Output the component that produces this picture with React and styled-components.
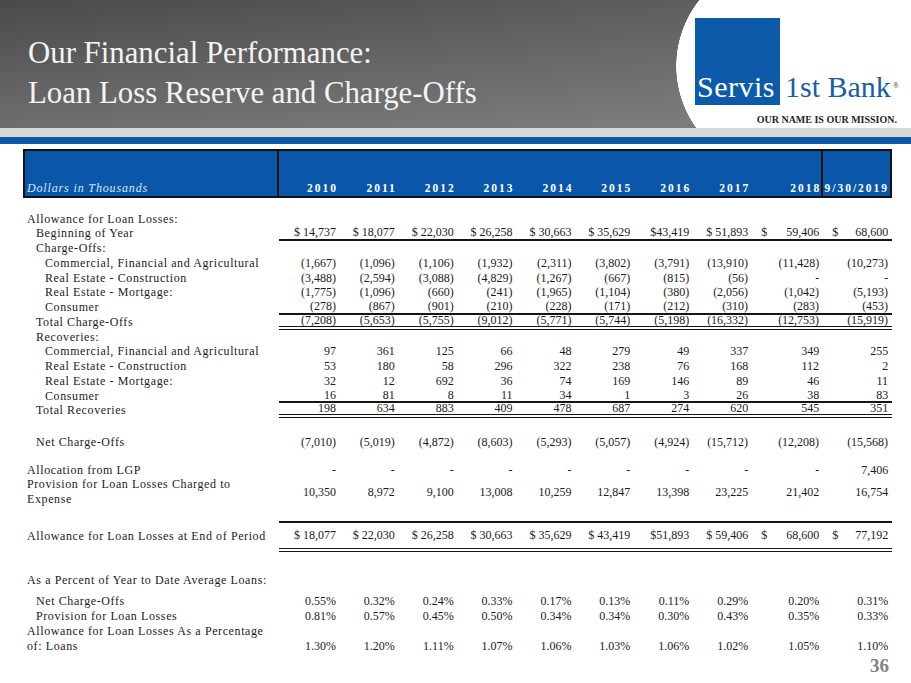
import React from 'react';
import styled, { createGlobalStyle } from 'styled-components';

const GlobalStyle = createGlobalStyle`
  *, *::before, *::after { box-sizing: border-box; }
  html, body { margin: 0; padding: 0; background: #fff; }
  body { font-family: "Liberation Serif", "Times New Roman", serif; }
`;

const COLS = '256px repeat(8, 58.9px) 71px 71px';

const YEARS = ['2010', '2011', '2012', '2013', '2014', '2015', '2016', '2017', '2018', '9/30/2019'];

const ROWS = [
  { label: 'Allowance for Loan Losses:', indent: 0, mt: 13.6 },
  { label: 'Beginning of Year', indent: 1, rule: 'single',
    values: ['$ 14,737', '$ 18,077', '$ 22,030', '$ 26,258', '$ 30,663', '$ 35,629', '$43,419', '$ 51,893', '$|59,406', '$|68,600'] },
  { label: 'Charge-Offs:', indent: 1 },
  { label: 'Commercial, Financial and Agricultural', indent: 2,
    values: ['(1,667)', '(1,096)', '(1,106)', '(1,932)', '(2,311)', '(3,802)', '(3,791)', '(13,910)', '(11,428)', '(10,273)'] },
  { label: 'Real Estate - Construction', indent: 2,
    values: ['(3,488)', '(2,594)', '(3,088)', '(4,829)', '(1,267)', '(667)', '(815)', '(56)', '-', '-'] },
  { label: 'Real Estate - Mortgage:', indent: 2,
    values: ['(1,775)', '(1,096)', '(660)', '(241)', '(1,965)', '(1,104)', '(380)', '(2,056)', '(1,042)', '(5,193)'] },
  { label: 'Consumer', indent: 2, rule: 'single',
    values: ['(278)', '(867)', '(901)', '(210)', '(228)', '(171)', '(212)', '(310)', '(283)', '(453)'] },
  { label: 'Total Charge-Offs', indent: 1, rule: 'double',
    values: ['(7,208)', '(5,653)', '(5,755)', '(9,012)', '(5,771)', '(5,744)', '(5,198)', '(16,332)', '(12,753)', '(15,919)'] },
  { label: 'Recoveries:', indent: 1 },
  { label: 'Commercial, Financial and Agricultural', indent: 2,
    values: ['97', '361', '125', '66', '48', '279', '49', '337', '349', '255'] },
  { label: 'Real Estate - Construction', indent: 2,
    values: ['53', '180', '58', '296', '322', '238', '76', '168', '112', '2'] },
  { label: 'Real Estate - Mortgage:', indent: 2,
    values: ['32', '12', '692', '36', '74', '169', '146', '89', '46', '11'] },
  { label: 'Consumer', indent: 2, rule: 'single',
    values: ['16', '81', '8', '11', '34', '1', '3', '26', '38', '83'] },
  { label: 'Total Recoveries', indent: 1, rule: 'double',
    values: ['198', '634', '883', '409', '478', '687', '274', '620', '545', '351'] },
  { label: 'Net Charge-Offs', indent: 1, mt: 16.5,
    values: ['(7,010)', '(5,019)', '(4,872)', '(8,603)', '(5,293)', '(5,057)', '(4,924)', '(15,712)', '(12,208)', '(15,568)'] },
  { label: 'Allocation from LGP', indent: 0, mt: 13.3,
    values: ['-', '-', '-', '-', '-', '-', '-', '-', '-', '7,406'] },
  { label: 'Provision for Loan Losses Charged to\nExpense', indent: 0, lines: 2,
    values: ['10,350', '8,972', '9,100', '13,008', '10,259', '12,847', '13,398', '23,225', '21,402', '16,754'] },
  { label: 'Allowance for Loan Losses at End of Period', indent: 0, mt: 14, rule: 'box',
    values: ['$ 18,077', '$ 22,030', '$ 26,258', '$ 30,663', '$ 35,629', '$ 43,419', '$51,893', '$ 59,406', '$|68,600', '$|77,192'] },
  { label: 'As a Percent of Year to Date Average Loans:', indent: 0, mt: 21.6 },
  { label: 'Net Charge-Offs', indent: 1, mt: 6.25,
    values: ['0.55%', '0.32%', '0.24%', '0.33%', '0.17%', '0.13%', '0.11%', '0.29%', '0.20%', '0.31%'] },
  { label: 'Provision for Loan Losses', indent: 1,
    values: ['0.81%', '0.57%', '0.45%', '0.50%', '0.34%', '0.34%', '0.30%', '0.43%', '0.35%', '0.33%'] },
  { label: 'Allowance for Loan Losses As a Percentage\nof: Loans', indent: 0, lines: 2, bottom: true,
    values: ['1.30%', '1.20%', '1.11%', '1.07%', '1.06%', '1.03%', '1.06%', '1.02%', '1.05%', '1.10%'] },
];

const Slide = styled.div`
  width: 911px;
  height: 683px;
  overflow: hidden;
  background: #fff;
  display: flex;
  flex-direction: column;
`;

const Header = styled.header`
  height: 128px;
  display: flex;
  background:
    linear-gradient(to right, rgba(255, 255, 255, 0) 0%, rgba(255, 255, 255, 0.14) 100%),
    linear-gradient(to bottom, #4a4a4a 0%, #6e6e6e 100%);
`;

const Title = styled.h1`
  flex: 1;
  margin: 0;
  padding: 33px 0 0 28px;
  font-weight: normal;
  font-size: 30.8px;
  line-height: 40px;
  color: #f4f4f4;
`;

const LogoPanel = styled.div`
  width: 235px;
  padding: 18px 0 0 19px;
  background:
    radial-gradient(circle 106px at 106px 66px, #fff 105.5px, rgba(255, 255, 255, 0) 106px),
    linear-gradient(to right, rgba(255, 255, 255, 0) 106px, #fff 106px);
`;

const LogoRow = styled.div`
  display: flex;
  align-items: baseline;
  font-size: 30px;
  line-height: 30px;
`;

const LogoSquare = styled.span`
  display: inline-block;
  width: 85px;
  height: 87px;
  padding: 54px 0 0 2px;
  background: #0c5aa9;
  color: #fff;
  letter-spacing: 0.5px;
`;

const LogoWord = styled.span`
  margin-left: 5px;
  color: #1b5ca8;
`;

const Registered = styled.span`
  font-size: 8px;
  vertical-align: 9px;
  margin-left: 2px;
  color: #333;
`;

const Tagline = styled.div`
  margin-top: 9px;
  padding-right: 14px;
  text-align: right;
  font-size: 10px;
  line-height: 12px;
  font-weight: bold;
  color: #1e1e1e;
`;

const GreyBand = styled.div`
  height: 9px;
  background: #d6d7d7;
`;

const BlueBand = styled.div`
  height: 7px;
  background: #0b59a8;
`;

const Table = styled.section`
  margin: 5px 0 0 23px;
  width: 869px;
`;

const HeadRow = styled.div`
  display: grid;
  grid-template-columns: ${COLS};
  height: 49px;
  background: #0a57aa;
  box-shadow: inset 0 0 0 2px #111;
`;

const HeadLabel = styled.div`
  display: flex;
  align-items: flex-end;
  padding: 0 0 3px 4px;
  border-right: 2px solid #111;
  font-style: italic;
  font-size: 12px;
  line-height: 14px;
  letter-spacing: 0.85px;
  color: #dbe6f5;
`;

const HeadCell = styled.div`
  display: flex;
  align-items: flex-end;
  justify-content: flex-end;
  padding: 0 ${(p) => (p.$last ? 3 : 0)}px 3px 0;
  border-left: ${(p) => (p.$last ? '2px solid #111' : 'none')};
  font-weight: bold;
  font-size: 11.5px;
  line-height: 14px;
  letter-spacing: 2px;
  color: #fff;
`;

const Row = styled.div`
  display: grid;
  grid-template-columns: ${COLS};
  grid-template-rows: ${(p) => p.$h}px;
  margin-top: ${(p) => p.$mt || 0}px;
  font-size: 12px;
  line-height: 14.75px;
  color: #1b1b1b;
`;

const Label = styled.div`
  display: flex;
  align-items: center;
  padding-left: ${(p) => 4 + p.$indent * 9}px;
  letter-spacing: 0.6px;
  white-space: pre;
`;

const ruleStyle = {
  single: 'border-bottom: 2px solid #151515;',
  double: 'border-bottom: 4px double #151515;',
  box: 'border-top: 2px solid #151515; border-bottom: 4px double #151515;',
};

const Value = styled.div`
  display: flex;
  align-items: ${(p) => (p.$bottom ? 'flex-end' : 'center')};
  justify-content: ${(p) => (p.$split ? 'space-between' : 'flex-end')};
  padding: 0 ${(p) => (p.$last ? 4 : 2)}px 0 ${(p) => (p.$split ? 11 : 0)}px;
  white-space: nowrap;
  ${(p) => (p.$rule ? ruleStyle[p.$rule] : '')}
`;

const PageNumber = styled.div`
  margin-top: 3px;
  padding-right: 22px;
  text-align: right;
  font-size: 19px;
  line-height: 20px;
  font-weight: bold;
  color: #828282;
`;

function rowHeight(row) {
  if (row.rule === 'box') return 31;
  return row.lines === 2 ? 29.5 : 14.75;
}

function TableRow({ row }) {
  return (
    <Row $h={rowHeight(row)} $mt={row.mt}>
      <Label $indent={row.indent}>{row.label}</Label>
      {row.values &&
        row.values.map((v, i) => {
          const parts = v.split('|');
          return (
            <Value
              key={i}
              $rule={row.rule}
              $bottom={row.bottom}
              $split={parts.length === 2}
              $last={i === row.values.length - 1}
            >
              {parts.length === 2 ? (
                <>
                  <span>{parts[0]}</span>
                  <span>{parts[1]}</span>
                </>
              ) : (
                v
              )}
            </Value>
          );
        })}
    </Row>
  );
}

export default function App() {
  return (
    <>
      <GlobalStyle />
      <Slide>
        <Header>
          <Title>
            Our Financial Performance:
            <br />
            Loan Loss Reserve and Charge-Offs
          </Title>
          <LogoPanel>
            <LogoRow>
              <LogoSquare>Servis</LogoSquare>
              <LogoWord>
                1st Bank<Registered>®</Registered>
              </LogoWord>
            </LogoRow>
            <Tagline>OUR NAME IS OUR MISSION.</Tagline>
          </LogoPanel>
        </Header>
        <GreyBand />
        <BlueBand />
        <Table>
          <HeadRow>
            <HeadLabel>Dollars in Thousands</HeadLabel>
            {YEARS.map((y, i) => (
              <HeadCell key={y} $last={i === YEARS.length - 1}>
                {y}
              </HeadCell>
            ))}
          </HeadRow>
          {ROWS.map((row, i) => (
            <TableRow key={i} row={row} />
          ))}
        </Table>
        <PageNumber>36</PageNumber>
      </Slide>
    </>
  );
}
